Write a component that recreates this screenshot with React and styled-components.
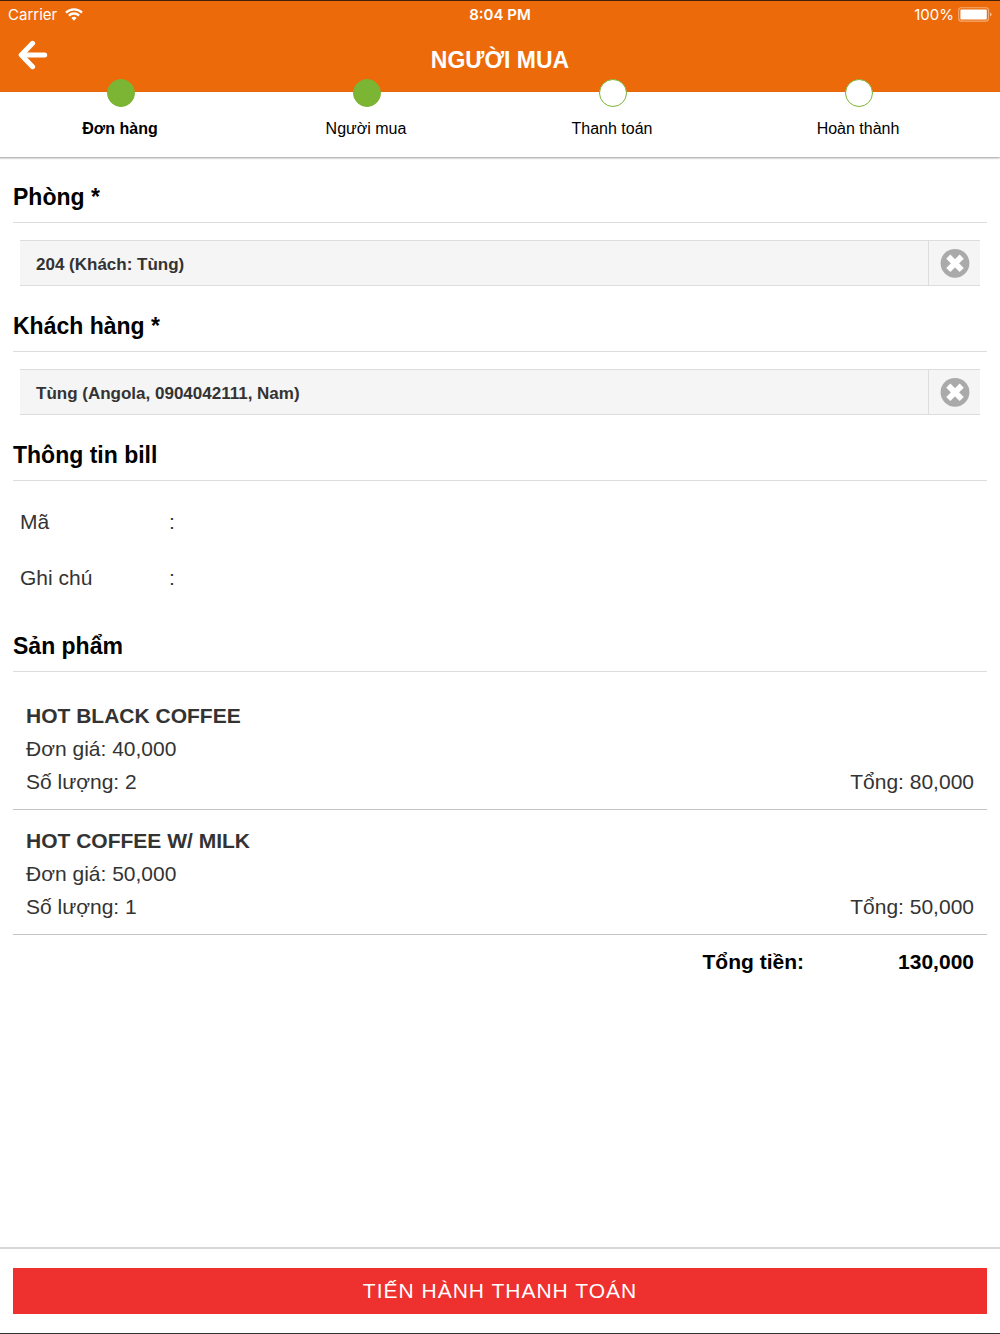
import React from "react";
import styled, { createGlobalStyle } from "styled-components";

const steps = [
	{ label: "Đơn hàng", done: true, current: true },
	{ label: "Người mua", done: true },
	{ label: "Thanh toán" },
	{ label: "Hoàn thành" }
];

const products = [
	{ name: "HOT BLACK COFFEE", price: "40,000", quantity: 2, total: "80,000" },
	{ name: "HOT COFFEE W/ MILK", price: "50,000", quantity: 1, total: "50,000" }
];

const SelectedField = ({ title, value }) => (
	<section>
		<SectionTitle>{title} *</SectionTitle>
		<Selected>
			<SelectedValue>{value}</SelectedValue>
			<RemoveButton type="button" aria-label={`Xóa ${title}`}>
				<svg width="30" height="30" viewBox="0 0 30 30">
					<circle cx="15" cy="15.3" r="14.4" fill="#aaa" />
					<path d="M8.3 8.6 21.7 22M21.7 8.6 8.3 22" stroke="#fff" strokeWidth="5.8" />
				</svg>
			</RemoveButton>
		</Selected>
	</section>
);

const App = () => {
	return (
		<Page>
			<GlobalStyle />
			<Header>
				<StatusBar>
					<StatusGroup>
						Carrier
						<svg width="18" height="13" viewBox="0 0 18 13" fill="none" stroke="#fff" strokeWidth="2.3">
							<path d="M1 4.6A11.4 11.4 0 0 1 17 4.6" />
							<path d="M3.9 7.6A7.2 7.2 0 0 1 14.1 7.6" />
							<path d="M9 12.8 6.4 10.1A3.7 3.7 0 0 1 11.6 10.1Z" fill="#fff" stroke="none" />
						</svg>
					</StatusGroup>
					<Clock>8:04 PM</Clock>
					<StatusGroup $end>
						100%
						<svg width="34" height="15" viewBox="0 0 34 15">
							<rect x="0.7" y="0.7" width="29.8" height="13.4" rx="2.6" fill="none" stroke="#fff" strokeOpacity="0.45" strokeWidth="1.1" />
							<rect x="2.4" y="2.4" width="26.4" height="10" rx="1" fill="#fff" />
							<path d="M32 5.2Q33.6 6 33.6 7.4T32 9.6Z" fill="#fff" fillOpacity="0.55" />
						</svg>
					</StatusGroup>
				</StatusBar>
				<TitleBar>
					<BackButton type="button" aria-label="Quay lại">
						<svg width="30" height="30" viewBox="0 0 30 30" fill="none" stroke="#fff" strokeWidth="5" strokeLinecap="round" strokeLinejoin="round">
							<path d="M14.6 3.3 3.2 15 14.6 26.7" />
							<path d="M5 15H26.7" />
						</svg>
					</BackButton>
					<Title>NGƯỜI MUA</Title>
				</TitleBar>
			</Header>

			<Steps>
				{steps.map((step) => (
					<Step key={step.label} $current={step.current}>
						<StepDot $done={step.done} />
						{step.label}
					</Step>
				))}
			</Steps>

			<Content>
				<SelectedField title="Phòng" value="204 (Khách: Tùng)" />
				<SelectedField title="Khách hàng" value="Tùng (Angola, 0904042111, Nam)" />

				{/* bill */}
				<section>
					<SectionTitle>Thông tin bill</SectionTitle>
					<BillFields>
						<BillRow>
							<label htmlFor="code">Mã</label>
							<span>:</span>
							<input id="code" name="code" type="text" />
						</BillRow>
						<BillRow>
							<label htmlFor="note">Ghi chú</label>
							<span>:</span>
							<input id="note" name="note" type="text" />
						</BillRow>
					</BillFields>
				</section>

				{/* products */}
				<section>
					<SectionTitle>Sản phẩm</SectionTitle>
					<ProductList>
						{products.map(({ name, price, quantity, total }) => (
							<Product key={name}>
								<h3>{name}</h3>
								<p>Đơn giá: {price}</p>
								<ProductTotals>
									<span>Số lượng: {quantity}</span>
									<span>Tổng: {total}</span>
								</ProductTotals>
							</Product>
						))}
					</ProductList>
					<GrandTotal>
						<span>Tổng tiền:</span>
						<strong>130,000</strong>
					</GrandTotal>
				</section>
			</Content>

			<Footer>
				<PayButton type="button">TIẾN HÀNH THANH TOÁN</PayButton>
			</Footer>
		</Page>
	);
};

const GlobalStyle = createGlobalStyle`
	* {
		box-sizing: border-box;
	}
	body {
		margin: 0;
		background: #fff;
		color: #333;
		font-family: "Liberation Sans", Arial, sans-serif;
		font-size: 21px;
	}
	h1, h2, h3, p, ul, ol {
		margin: 0;
		padding: 0;
	}
	ul, ol {
		list-style: none;
	}
	button, input {
		border: none;
		padding: 0;
		font: inherit;
		color: inherit;
		background: transparent;
	}
	button {
		cursor: pointer;
	}
	svg {
		display: block;
	}
`;

const Page = styled.div`
	min-height: 100vh;
	display: flex;
	flex-direction: column;
	border-bottom: 1px solid #333;
`;

const Header = styled.header`
	background: #ec6a0a;
	color: #fff;
	border-top: 1px solid #43200a;
`;

const StatusBar = styled.div`
	display: grid;
	grid-template-columns: 1fr auto 1fr;
	align-items: center;
	height: 26px;
	padding: 0 8px;
	font-family: Inter, sans-serif;
	font-size: 15px;
`;

const StatusGroup = styled.div`
	display: flex;
	align-items: center;
	gap: ${({ $end }) => ($end ? "4px" : "8px")};
	justify-content: ${({ $end }) => ($end ? "flex-end" : "flex-start")};
`;

const Clock = styled.span`
	font-weight: 600;
`;

const TitleBar = styled.div`
	display: grid;
	grid-template-columns: 48px 1fr 48px;
	align-items: start;
	height: 65px;
	padding-top: 13px;
`;

const BackButton = styled.button`
	padding-left: 18px;
`;

const Title = styled.h1`
	text-align: center;
	font-size: 23px;
	line-height: 40px;
`;

const Steps = styled.ol`
	display: grid;
	grid-template-columns: repeat(4, 1fr);
	height: 65px;
	box-shadow: 0 1px 2px rgba(0, 0, 0, 0.4);

	&& {
		margin-left: -3px;
		padding-right: 19px;
	}
`;

const Step = styled.li`
	display: flex;
	flex-direction: column;
	align-items: center;
	margin-top: -13px;
	gap: 13px;
	color: #000;
	font-size: 16px;
	line-height: 18px;
	font-weight: ${({ $current }) => ($current ? "bold" : "normal")};
`;

const StepDot = styled.span`
	width: 28px;
	height: 28px;
	margin-left: 2px;
	border: 1px solid #7cb433;
	border-radius: 50%;
	background: ${({ $done }) => ($done ? "#7cb433" : "#fff")};
`;

const Content = styled.main`
	flex: 1;
	padding: 0 13px 24px;
`;

const SectionTitle = styled.h2`
	padding: 26px 0 11px;
	border-bottom: 1px solid #ddd;
	color: #000;
	font-size: 23px;
	line-height: 28px;
`;

const Selected = styled.div`
	display: flex;
	height: 46px;
	margin: 17px 7px 0;
	border: 1px solid #ddd;
	border-width: 1px 0;
	background: #f5f5f5;
`;

const SelectedValue = styled.span`
	flex: 1;
	padding: 0 16px;
	font-size: 17px;
	font-weight: bold;
	line-height: 48px;
`;

const RemoveButton = styled.button`
	display: flex;
	align-items: center;
	justify-content: center;
	width: 52px;
	border-left: 1px solid #ddd;
`;

const BillFields = styled.div`
	padding: 13px 7px 0;
`;

const BillRow = styled.div`
	display: grid;
	grid-template-columns: 149px 16px 1fr;
	align-items: center;
	height: 56px;
`;

const ProductList = styled.ul`
	padding-top: 13px;
`;

const Product = styled.li`
	padding: 14px 13px 11px;
	border-bottom: 1px solid #c4c4c4;
	line-height: 33px;
	h3 {
		font-size: 21px;
	}
`;

const ProductTotals = styled.div`
	display: flex;
	justify-content: space-between;
`;

const GrandTotal = styled.div`
	display: grid;
	grid-template-columns: 1fr 170px;
	padding: 11px 13px 0;
	color: #000;
	font-weight: bold;
	line-height: 32px;
	text-align: right;
`;

const Footer = styled.footer`
	padding: 19px 13px;
	border-top: 2px solid #d8d8d8;
`;

const PayButton = styled.button`
	width: 100%;
	height: 46px;
	background: #ee302f;
	color: #fff;
	letter-spacing: 1px;
`;

export default App;
